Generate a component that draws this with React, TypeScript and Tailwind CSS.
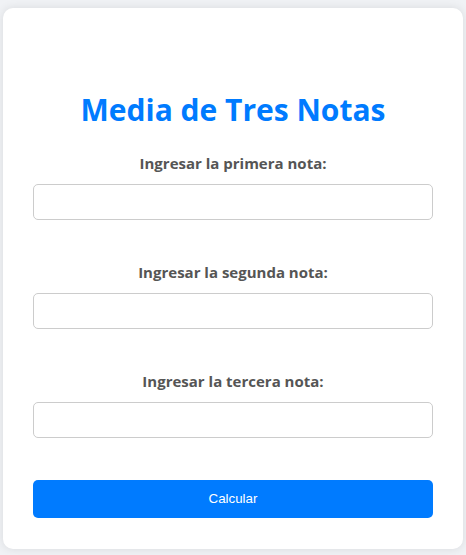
import React from 'react';

const fields = [
  'Ingresar la primera nota:',
  'Ingresar la segunda nota:',
  'Ingresar la tercera nota:',
];

export default function App() {
  return (
    <div className="min-h-screen bg-[#f0f2f5] pt-[8px] px-[3px] font-['Open_Sans',sans-serif]">
      <div className="w-[460px] rounded-[10px] bg-white shadow-[0_0_10px_rgba(0,0,0,0.1)] px-[30px] pt-[82px] pb-[31px]">
        <h1 className="text-center text-[30px] leading-[40px] font-bold text-[#007bff] mb-[23px]">
          Media de Tres Notas
        </h1>
        {fields.map((label, i) => (
          <div key={i} className="mb-[42px]">
            <label className="block text-center text-[15px] leading-[20px] font-bold text-[#555] mb-[11px]">
              {label}
            </label>
            <input
              type="number"
              className="block w-full h-[36px] rounded-[5px] border border-[#ccc] bg-white px-[10px] outline-none"
            />
          </div>
        ))}
        <button className="block w-full h-[38px] rounded-[5px] bg-[#007bff] text-white text-[13.33px] font-['Liberation_Sans',Arial,sans-serif]">
          Calcular
        </button>
      </div>
    </div>
  );
}
